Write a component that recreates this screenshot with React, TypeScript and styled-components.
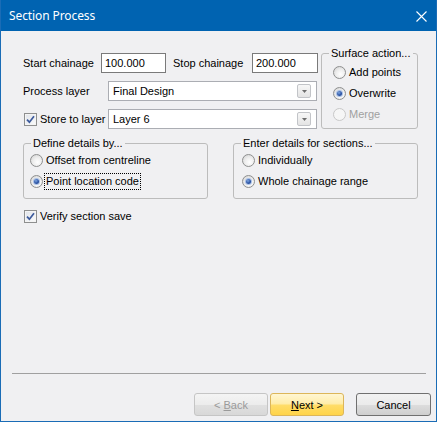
import React from 'react';
import styled, { createGlobalStyle } from 'styled-components';

const GlobalStyle = createGlobalStyle`
  html, body {
    margin: 0;
    padding: 0;
    background: #ffffff;
  }
  body {
    font-family: "Liberation Sans", Arial, sans-serif;
    font-size: 11px;
    color: #000000;
  }
  * {
    box-sizing: border-box;
  }
`;

function CheckMark() {
  return (
    <svg width="9" height="9" viewBox="0 0 9 9">
      <path d="M1 4.6 L3.4 7.2 L8 1.2" fill="none" stroke="#3c5a9c" strokeWidth="1.7" />
    </svg>
  );
}

function CloseIcon() {
  return (
    <svg width="11" height="11" viewBox="0 0 11 11">
      <path d="M0.5 0.5 L10.5 10.5 M10.5 0.5 L0.5 10.5" stroke="#ffffff" strokeWidth="1.1" />
    </svg>
  );
}

function DropArrow() {
  return (
    <svg width="5" height="3" viewBox="0 0 5 3">
      <path d="M0 0 L5 0 L2.5 3 Z" fill="#6d6d6d" />
    </svg>
  );
}

interface RadioProps {
  label: string;
  checked?: boolean;
  disabled?: boolean;
  focused?: boolean;
}

function Radio({ label, checked, disabled, focused }: RadioProps) {
  return (
    <RadioItem>
      <RadioCircle $disabled={disabled}>{checked && <RadioDot />}</RadioCircle>
      <RadioLabel $disabled={disabled} $focused={focused}>
        {label}
      </RadioLabel>
    </RadioItem>
  );
}

function App() {
  return (
    <>
      <GlobalStyle />
      <Window>
        <TitleBar>
          <TitleText>Section Process</TitleText>
          <CloseButton>
            <CloseIcon />
          </CloseButton>
        </TitleBar>
        <Body>
          <Main>
            <TopSection>
              <FieldColumn>
                <FieldRow>
                  <Label $width={78}>Start chainage</Label>
                  <TextInput $width={65} defaultValue="100.000" />
                  <Label $width={79} $gap={7}>
                    Stop chainage
                  </Label>
                  <TextInput $width={66} defaultValue="200.000" />
                </FieldRow>
                <FieldRow>
                  <Label $width={85}>Process layer</Label>
                  <Combo>
                    <ComboText>Final Design</ComboText>
                    <DropButton>
                      <DropArrow />
                    </DropButton>
                  </Combo>
                </FieldRow>
                <FieldRow>
                  <CheckBox>
                    <CheckMark />
                  </CheckBox>
                  <Label $width={68} $gap={3}>
                    Store to layer
                  </Label>
                  <Combo>
                    <ComboText>Layer 6</ComboText>
                    <DropButton>
                      <DropArrow />
                    </DropButton>
                  </Combo>
                </FieldRow>
              </FieldColumn>
              <GroupBox $width={97} $gap={3}>
                <Legend>Surface action...</Legend>
                <GroupContent $padLeft={11} $padTop={2} $padBottom={3}>
                  <Radio label="Add points" />
                  <Radio label="Overwrite" checked />
                  <Radio label="Merge" disabled />
                </GroupContent>
              </GroupBox>
            </TopSection>

            <GroupRow>
              <GroupBox $width={185}>
                <Legend>Define details by...</Legend>
                <GroupContent $padLeft={6} $padTop={0} $padBottom={6}>
                  <Radio label="Offset from centreline" />
                  <Radio label="Point location code" checked focused />
                </GroupContent>
              </GroupBox>
              <GroupBox $width={185}>
                <Legend>Enter details for sections...</Legend>
                <GroupContent $padLeft={8} $padTop={0} $padBottom={6}>
                  <Radio label="Individually" />
                  <Radio label="Whole chainage range" checked />
                </GroupContent>
              </GroupBox>
            </GroupRow>

            <VerifyRow>
              <CheckBox>
                <CheckMark />
              </CheckBox>
              <Label $gap={3}>Verify section save</Label>
            </VerifyRow>
          </Main>

          <Separator />
          <ButtonRow>
            <DialogButton $variant="disabled">
              &lt; <u>B</u>ack
            </DialogButton>
            <DialogButton $variant="default">
              <u>N</u>ext &gt;
            </DialogButton>
            <DialogButton $variant="normal" $gap={10} $width={75}>
              Cancel
            </DialogButton>
          </ButtonRow>
        </Body>
      </Window>
    </>
  );
}

const Window = styled.div`
  width: 437px;
  height: 422px;
  display: flex;
  flex-direction: column;
  border: 1px solid #1a6cb6;
  border-top: none;
  background: #0063b1;
`;

const TitleBar = styled.div`
  height: 31px;
  display: flex;
  align-items: center;
  justify-content: space-between;
  padding: 0 9px 0 8px;
  background: #0063b1;
`;

const TitleText = styled.span`
  font-family: "Segoe UI", "Noto Sans", "Open Sans", sans-serif;
  font-size: 12px;
  color: #ffffff;
  letter-spacing: -0.1px;
`;

const CloseButton = styled.span`
  display: flex;
  align-items: center;
  justify-content: center;
  width: 11px;
  height: 11px;
  margin-top: 1px;
`;

const Body = styled.div`
  flex: 1;
  display: flex;
  flex-direction: column;
  background: #f0f0f2;
`;

const Main = styled.div`
  flex: 1;
  padding: 16px 18px 0 22px;
`;

const TopSection = styled.div`
  display: flex;
  align-items: flex-start;
`;

const FieldColumn = styled.div`
  width: 295px;
  margin-top: 6px;
  display: flex;
  flex-direction: column;
  gap: 8px;
`;

const FieldRow = styled.div`
  height: 20px;
  display: flex;
  align-items: center;
`;

const Label = styled.span<{ $width?: number; $gap?: number }>`
  flex: none;
  width: ${(props) => (props.$width ? `${props.$width}px` : 'auto')};
  margin-left: ${(props) => props.$gap || 0}px;
  white-space: nowrap;
  line-height: 13px;
`;

const TextInput = styled.input<{ $width: number }>`
  flex: none;
  width: ${(props) => props.$width}px;
  height: 20px;
  margin: 0;
  padding: 0 0 1px 3px;
  border: 1px solid #7a7a7a;
  background: #ffffff;
  font-family: "Liberation Sans", Arial, sans-serif;
  font-size: 11px;
  color: #000000;
  outline: none;
`;

const Combo = styled.div`
  flex: none;
  width: 209px;
  height: 20px;
  display: flex;
  align-items: center;
  justify-content: space-between;
  padding: 0 5px 0 4px;
  border: 1px solid #abadb3;
  background: #ffffff;
`;

const ComboText = styled.span`
  line-height: 13px;
`;

const DropButton = styled.span`
  width: 14px;
  height: 14px;
  display: flex;
  align-items: center;
  justify-content: center;
  border: 1px solid #c2c4c8;
  border-radius: 2px;
  background: linear-gradient(#f7f7f7, #e4e4e4);
`;

const CheckBox = styled.span`
  flex: none;
  width: 13px;
  height: 13px;
  margin-left: 1px;
  display: flex;
  align-items: center;
  justify-content: center;
  border: 1px solid #8e8f8f;
  background: linear-gradient(135deg, #dfe3ea, #fbfbfb);
  box-shadow: inset 0 0 0 1px #f4f4f4;
`;

const GroupBox = styled.fieldset<{ $width: number; $gap?: number }>`
  flex: none;
  width: ${(props) => props.$width}px;
  min-width: 0;
  margin: 0 0 0 ${(props) => props.$gap || 0}px;
  padding: 0;
  border: 1px solid #bcbcbc;
  border-radius: 3px;
`;

const Legend = styled.legend`
  margin-left: 7px;
  padding: 0 2px;
  line-height: 13px;
  font-size: 11px;
`;

const GroupContent = styled.div<{ $padLeft: number; $padTop: number; $padBottom: number }>`
  display: flex;
  flex-direction: column;
  padding: ${(props) => props.$padTop}px 0 ${(props) => props.$padBottom}px
    ${(props) => props.$padLeft}px;
`;

const RadioItem = styled.div`
  height: 21px;
  display: flex;
  align-items: center;
`;

const RadioCircle = styled.span<{ $disabled?: boolean }>`
  flex: none;
  width: 13px;
  height: 13px;
  display: flex;
  align-items: center;
  justify-content: center;
  border-radius: 50%;
  border: 1px solid ${(props) => (props.$disabled ? '#c8c8c8' : '#8e8f8f')};
  background: ${(props) =>
    props.$disabled
      ? '#f6f6f6'
      : 'radial-gradient(circle at 60% 65%, #ffffff 0%, #eeeeee 45%, #cfcfcf 100%)'};
`;

const RadioDot = styled.span`
  width: 5px;
  height: 5px;
  border-radius: 50%;
  background: radial-gradient(circle at 40% 35%, #7fa6e0 0%, #2b54a6 55%, #1b3f86 100%);
  box-shadow: 0 0 0 1px #a9c0e6;
`;

const RadioLabel = styled.span<{ $disabled?: boolean; $focused?: boolean }>`
  margin-left: 1px;
  padding: 1px 1px;
  line-height: 13px;
  white-space: nowrap;
  border: 1px dotted ${(props) => (props.$focused ? '#000000' : 'transparent')};
  color: ${(props) => (props.$disabled ? '#a0a0a0' : '#000000')};
`;

const GroupRow = styled.div`
  margin-top: 8px;
  display: flex;
  justify-content: space-between;
`;

const VerifyRow = styled.div`
  margin-top: 11px;
  height: 13px;
  display: flex;
  align-items: center;
`;

const Separator = styled.div`
  height: 1px;
  margin: 0 10px 0 11px;
  background: #a0a0a0;
`;

const buttonLook = {
  disabled: `
    border-color: #c5c5c5;
    background: linear-gradient(#f4f4f4 0%, #ececec 50%, #e0e0e0 51%, #d8d8d8 100%);
    color: #9a9a9a;
  `,
  default: `
    border-color: #dcb65a;
    background: linear-gradient(#fff6d2 0%, #ffedab 45%, #ffdc66 55%, #ffd44a 100%);
    color: #000000;
  `,
  normal: `
    border-color: #707070;
    background: linear-gradient(#f2f2f2 0%, #ebebeb 50%, #dddddd 51%, #cfcfcf 100%);
    color: #000000;
  `,
};

const ButtonRow = styled.div`
  margin-top: 19px;
  padding: 0 5px 5px 0;
  display: flex;
  justify-content: flex-end;
  gap: 2px;
`;

const DialogButton = styled.button<{
  $variant: 'disabled' | 'default' | 'normal';
  $gap?: number;
  $width?: number;
}>`
  width: ${(props) => props.$width || 74}px;
  height: 23px;
  margin: 0 0 0 ${(props) => props.$gap || 0}px;
  padding: 0;
  border: 1px solid;
  border-radius: 3px;
  font-family: "Liberation Sans", Arial, sans-serif;
  font-size: 11px;
  ${(props) => buttonLook[props.$variant]}
`;

export default App;
